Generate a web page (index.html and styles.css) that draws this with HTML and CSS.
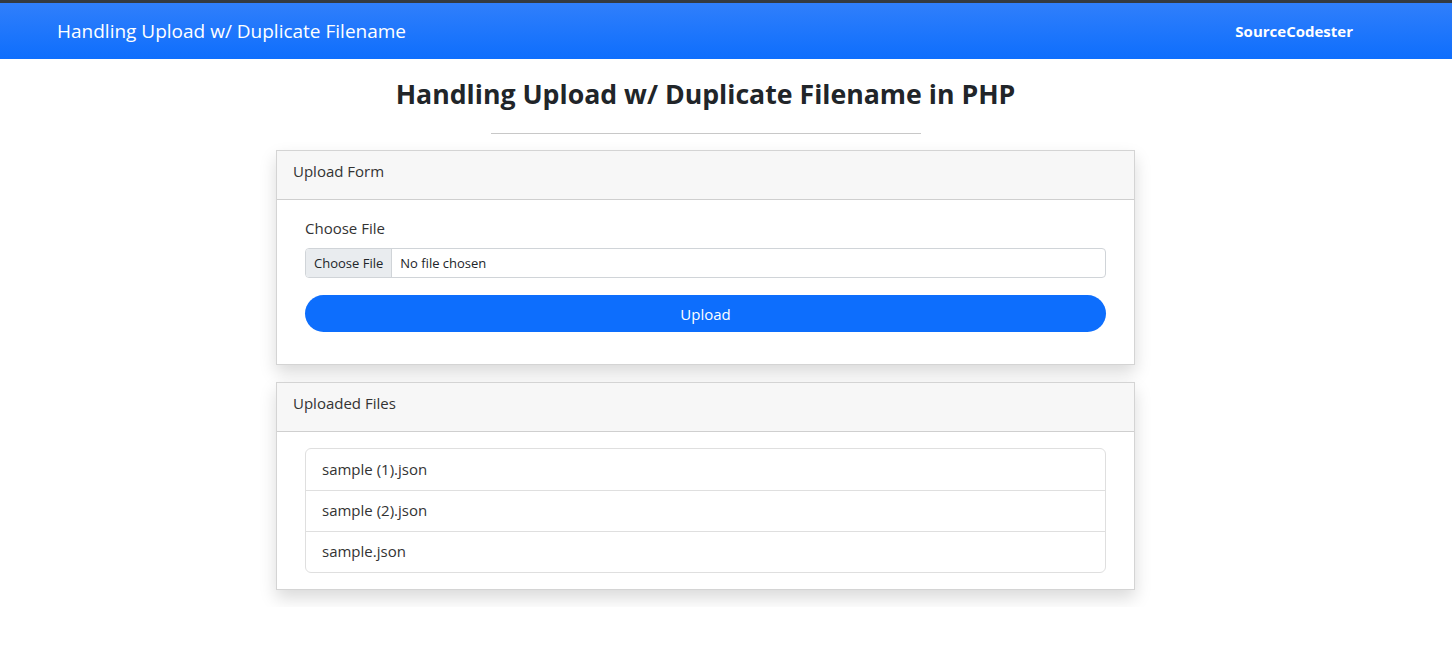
FILE: index.html
```html
<!DOCTYPE html>
<html>
<head>
<meta charset="utf-8">
<title>Handling Upload w/ Duplicate Filename</title>
<link rel="stylesheet" href="styles.css">
</head>
<body>
<nav class="navbar">
  <div class="brand">Handling Upload w/ Duplicate Filename</div>
  <div class="site">SourceCodester</div>
</nav>
<main class="main">
  <h1 class="page-title">Handling Upload w/ Duplicate Filename in PHP</h1>
  <hr class="divider">
  <section class="card">
    <div class="card-header">Upload Form</div>
    <div class="card-body">
      <label class="form-label">Choose File</label>
      <div class="file-input">
        <span class="file-btn">Choose File</span>
        <span class="file-name">No file chosen</span>
      </div>
      <button class="btn-upload">Upload</button>
    </div>
  </section>
  <section class="card">
    <div class="card-header">Uploaded Files</div>
    <div class="card-body list-body">
      <ul class="list-group">
        <li class="list-item">sample (1).json</li>
        <li class="list-item">sample (2).json</li>
        <li class="list-item">sample.json</li>
      </ul>
    </div>
  </section>
</main>
</body>
</html>
```
FILE: styles.css
```css
* { box-sizing: border-box; }
body {
  margin: 0;
  font-family: "Open Sans", "Noto Sans", sans-serif;
  color: #212529;
  background: #fff;
  font-size: 15px;
}
.navbar {
  border-top: 3px solid #343a40;
  height: 59px;
  background: linear-gradient(180deg, #307ffb 0%, #0e6efd 100%);
  display: flex;
  align-items: center;
  justify-content: space-between;
  padding: 0 99px 0 57px;
  color: #fff;
}
.brand { font-size: 19px; }
.site { font-size: 15px; font-weight: 700; }
.main {
  display: flex;
  flex-direction: column;
  align-items: center;
  padding-right: 41px;
}
.page-title {
  margin: 17px 0 0;
  font-size: 26.7px;
  font-weight: 700;
  line-height: 36px;
}
.divider {
  width: 430px;
  border: 0;
  border-top: 1px solid #c8c8c8;
  margin: 21px 0 16px;
}
.card {
  width: 859px;
  border: 1px solid #d4d4d4;
  background: #fff;
  box-shadow: 0 8px 16px rgba(0,0,0,.15);
  margin-bottom: 17px;
}
.card-header {
  height: 49px;
  background: #f7f7f7;
  border-bottom: 1px solid #cfcfcf;
  padding: 8px 16px 0;
  line-height: 24px;
  color: #333;
}
.card-body {
  padding: 16px 28px 32px;
  display: flex;
  flex-direction: column;
}
.form-label { line-height: 24px; margin-bottom: 8px; color: #333; }
.file-input {
  display: flex;
  height: 30px;
  border: 1px solid #d0d4d8;
  border-radius: 4px;
  overflow: hidden;
  font-size: 13px;
  margin-bottom: 17px;
}
.file-btn {
  background: #e9ecef;
  border-right: 1px solid #d0d4d8;
  padding: 0 8px;
  display: flex;
  align-items: center;
}
.file-name { padding: 0 8px; display: flex; align-items: center; }
.btn-upload {
  height: 37px;
  border: 0;
  border-radius: 19px;
  background: #0d6efd;
  color: #fff;
  font-family: inherit;
  font-size: 15px;
}
.list-body { padding: 16px 28px 16px; }
.list-group {
  list-style: none;
  margin: 0;
  padding: 0;
  border: 1px solid #dfdfdf;
  border-radius: 6px;
}
.list-item {
  height: 41px;
  display: flex;
  align-items: center;
  padding: 0 16px;
  padding-bottom: 2px;
  color: #333;
}
.list-item + .list-item { border-top: 1px solid #dfdfdf; }
```
